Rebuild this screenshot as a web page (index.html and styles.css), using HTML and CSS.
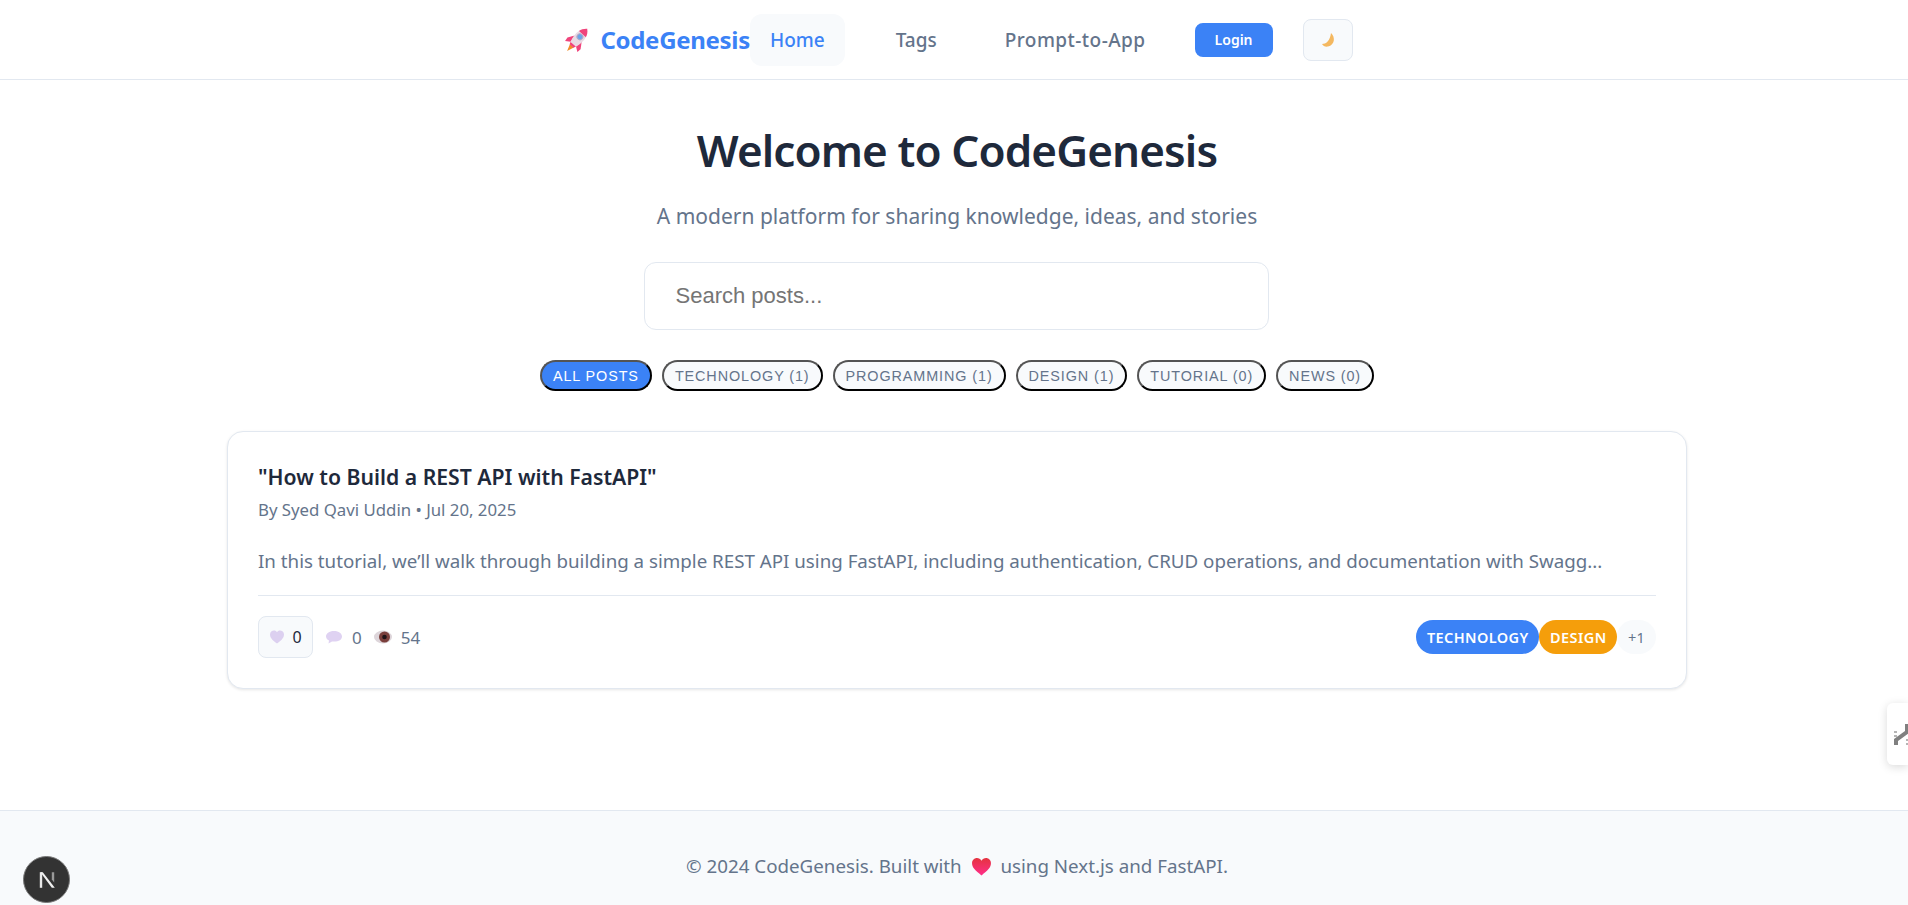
FILE: index.html
```html
<!DOCTYPE html>
<html lang="en">
<head>
    <meta charset="UTF-8">
    <meta name="viewport" content="width=device-width, initial-scale=1.0">
    <title>CodeGenesis</title>
    <link rel="stylesheet" href="styles.css">
</head>
<body>
    <header class="header">
        <nav class="nav">
            <a class="logo">
                <svg class="logo-icon" viewBox="0 0 26 26" width="27" height="27">
                    <g transform="rotate(42 13 13)">
                        <path d="M10.500 21 H15.500 L13 28 Z" fill="#f28c28"/>
                        <path d="M8.500 12 L4.500 18 L5 22 L9.500 19 Z" fill="#f0447c"/>
                        <path d="M17.500 12 L21.500 18 L21 22 L16.500 19 Z" fill="#f0447c"/>
                        <path d="M9.500 19 H16.500 L15.500 21.500 H10.500 Z" fill="#f0447c"/>
                        <path d="M8.500 6 H17.500 C18.500 10 18 15 16.500 19 H9.500 C8 15 7.500 10 8.500 6 Z" fill="#e9dbe4"/>
                        <path d="M13 -1 C15.500 1 17 3.500 17.500 6 H8.500 C9 3.500 10.500 1 13 -1 Z" fill="#f0447c"/>
                        <circle cx="13" cy="9.500" r="2.800" fill="#6aa5e8" stroke="#b0a8c8"/>
                    </g>
                </svg>
                <span>CodeGenesis</span>
            </a>
            <a class="nav-link active">Home</a>
            <a class="nav-link">Tags</a>
            <a class="nav-link prompt">Prompt-to-App</a>
            <button class="login-btn">Login</button>
            <button class="theme-btn">
                <svg viewBox="0 0 16 16" width="16" height="16">
                    <path d="M11 1 C15.500 5 15 13 8 14.500 C5.500 15 3 14 2 12 C6 12 10 9 11 1 Z" fill="#f4b860"/>
                </svg>
            </button>
        </nav>
    </header>

    <main class="main">
        <section class="hero">
            <h1>Welcome to CodeGenesis</h1>
            <p>A modern platform for sharing knowledge, ideas, and stories</p>
        </section>

        <input class="search" type="text" placeholder="Search posts...">

        <div class="filters">
            <button class="chip selected">All Posts</button>
            <button class="chip">Technology (1)</button>
            <button class="chip">Programming (1)</button>
            <button class="chip">Design (1)</button>
            <button class="chip">Tutorial (0)</button>
            <button class="chip">News (0)</button>
        </div>

        <article class="card">
            <h2>"How to Build a REST API with FastAPI"</h2>
            <div class="meta">By Syed Qavi Uddin • Jul 20, 2025</div>
            <p class="excerpt">In this tutorial, we’ll walk through building a simple REST API using FastAPI, including authentication, CRUD operations, and documentation with Swagg...</p>
            <div class="card-footer">
                <div class="stats">
                    <button class="like-btn">
                        <svg viewBox="0 0 16 16" width="16" height="16">
                            <path d="M8 14.500 C3 11 1 8.500 1 5.500 C1 3 3 1.500 5 1.500 C6.300 1.500 7.400 2.200 8 3.200 C8.600 2.200 9.700 1.500 11 1.500 C13 1.500 15 3 15 5.500 C15 8.500 13 11 8 14.500 Z" fill="#dcd0f0"/>
                        </svg>
                        <span>0</span>
                    </button>
                    <span class="stat">
                        <svg viewBox="0 0 18 16" width="18" height="16">
                            <path d="M9 2 C14 2 17 4.500 17 7.500 C17 10.500 14 12.500 9 12.500 L7 12.500 L3.500 14.500 L4 11.500 C2 10.500 1 9 1 7.500 C1 4.500 4 2 9 2 Z" fill="#dfd2f2"/>
                        </svg>
                        <span>0</span>
                    </span>
                    <span class="stat">
                        <svg viewBox="0 0 18 16" width="18" height="16">
                            <ellipse cx="9" cy="8" rx="9" ry="6.500" fill="#ddd5da"/>
                            <circle cx="10.500" cy="8" r="5.500" fill="#7a3f3c"/>
                            <circle cx="10.500" cy="8" r="2.300" fill="#1f1418"/>
                        </svg>
                        <span>54</span>
                    </span>
                </div>
                <div class="tags">
                    <span class="tag tag-blue">TECHNOLOGY</span>
                    <span class="tag tag-orange">DESIGN</span>
                    <span class="tag tag-more">+1</span>
                </div>
            </div>
        </article>
    </main>

    <footer class="footer">
        <p>© 2024 CodeGenesis. Built with
            <svg class="footer-heart" viewBox="0 0 20 20" width="21" height="21">
                <defs>
                    <linearGradient id="heartFill" x1="0" y1="0" x2="0" y2="1">
                        <stop offset="0" stop-color="#e5333f"/>
                        <stop offset="1" stop-color="#ff2e8a"/>
                    </linearGradient>
                </defs>
                <path d="M10 18.500 C4 14 1 11 1 7 C1 4 3.200 2 5.700 2 C7.500 2 9 3 10 4.500 C11 3 12.500 2 14.300 2 C16.800 2 19 4 19 7 C19 11 16 14 10 18.500 Z" fill="url(#heartFill)"/>
            </svg>
            using Next.js and FastAPI.</p>
    </footer>

    <div class="next-badge">
        <svg viewBox="0 0 20 20" width="24" height="24">
            <path d="M4 3.500 H6 V16.500 H4 Z" fill="#e8e8e8"/>
            <path d="M4.500 3.500 H6.500 L16.500 16.500 H14 Z" fill="#f0f0f0"/>
            <path d="M14 3.500 H16 V12 L14 9.500 Z" fill="#9a9a9a"/>
        </svg>
    </div>

    <div class="side-tab">
        <svg viewBox="0 0 16 22" width="16" height="22">
            <path d="M1 8 H4 V10 H1 Z M1 12 H4 V14 H1 Z M13 16 H16 V18 H13 Z M13 20 H16 V22 H13 Z" fill="#b5b5b5"/>
            <path d="M1 22 V16 L12 8 V1 H16 V10 L5 18 V22 Z" fill="#808080"/>
        </svg>
    </div>
</body>
</html>
```

FILE: styles.css
```css
* {
    box-sizing: border-box;
}
html, body {
    margin: 0;
    height: 905px;
    overflow: hidden;
}
body {
    font-family: "Noto Sans", "Open Sans", sans-serif;
    background-color: white;
    color: #1e293b;
    display: flex;
    flex-direction: column;
}
.header {
    height: 80px;
    flex-shrink: 0;
    border-bottom: 1px solid #e2e8f0;
    padding-left: 9px;
}
.nav {
    height: 79px;
    display: flex;
    align-items: center;
    justify-content: center;
}
.logo {
    display: flex;
    align-items: center;
    gap: 9px;
    font-size: 24px;
    font-weight: 700;
    color: #3b82f6;
    letter-spacing: -0.3px;
}
.nav-link {
    height: 52px;
    display: flex;
    align-items: center;
    padding: 0 20px;
    border-radius: 12px;
    font-size: 19px;
    font-weight: 500;
    color: #64748b;
    margin-right: 28px;
}
.nav-link.active {
    color: #3b82f6;
    background-color: #f8fafc;
    margin-right: 31px;
}
.nav-link.prompt {
    letter-spacing: 0.45px;
}
.login-btn {
    width: 78px;
    height: 34px;
    margin-left: 1px;
    border: none;
    border-radius: 8px;
    background-color: #3b82f6;
    color: white;
    font-family: inherit;
    font-size: 14px;
    font-weight: 600;
}
.theme-btn {
    width: 50px;
    height: 42px;
    margin-left: 30px;
    display: flex;
    align-items: center;
    justify-content: center;
    border: 1px solid #e2e8f0;
    border-radius: 8px;
    background-color: #f8fafc;
}
.main {
    flex: 1;
    padding-left: 6px;
    display: flex;
    flex-direction: column;
    align-items: center;
}
.hero {
    text-align: center;
    padding-top: 40px;
}
.hero h1 {
    margin: 0;
    font-size: 44px;
    line-height: 60px;
    font-weight: 600;
    letter-spacing: -0.9px;
    color: #1e293b;
}
.hero p {
    margin: 21px 0 0;
    font-size: 21px;
    line-height: 30px;
    color: #64748b;
}
.search {
    width: 625px;
    height: 68px;
    margin: 31px 2px 0 0;
    padding: 0 31px;
    border: 1px solid #e2e8f0;
    border-radius: 12px;
    background-color: white;
    font-family: "Liberation Sans", Arial, sans-serif;
    font-size: 22px;
    outline: none;
}
.filters {
    display: flex;
    gap: 10px;
    margin-top: 30px;
}
.chip {
    height: 31px;
    padding: 0 11px;
    border: 2px outset #000;
    border-radius: 20px;
    background-color: #f8fafc;
    color: #64748b;
    font-family: "Liberation Sans", Arial, sans-serif;
    font-size: 14.4px;
    text-transform: uppercase;
    letter-spacing: 0.9px;
}
.chip.selected {
    background-color: #3b82f6;
    color: white;
}
.card {
    width: 1460px;
    height: 258px;
    margin-top: 40px;
    padding: 29px 30px;
    border: 1px solid #e2e8f0;
    border-radius: 16px;
    background-color: white;
    box-shadow: 0 1px 3px rgba(0,0,0,0.1);
}
.card h2 {
    margin: 0;
    font-size: 21.200px;
    line-height: 32px;
    font-weight: 600;
    color: #1e293b;
}
.meta {
    margin-top: 4px;
    font-size: 16.800px;
    line-height: 26px;
    color: #64748b;
}
.excerpt {
    margin: 23px 0 0;
    font-size: 18.740px;
    line-height: 29px;
    color: #64748b;
}
.card-footer {
    margin-top: 20px;
    padding-top: 20px;
    border-top: 1px solid #e2e8f0;
    display: flex;
    justify-content: space-between;
    align-items: center;
}
.stats {
    display: flex;
    align-items: center;
    gap: 12px;
}
.like-btn {
    height: 42px;
    width: 55px;
    display: flex;
    align-items: center;
    justify-content: center;
    gap: 7px;
    border: 1px solid #e2e8f0;
    border-radius: 8px;
    background-color: #f8fafc;
    color: #1e293b;
    font-family: inherit;
    font-size: 16px;
}
.stat {
    display: flex;
    align-items: center;
    gap: 9px;
    font-size: 17px;
    color: #64748b;
}
.tags {
    display: flex;
}
.tag {
    height: 34px;
    display: flex;
    align-items: center;
    padding: 0 10.700px;
    border-radius: 17px;
    font-size: 14.500px;
    font-weight: 600;
    letter-spacing: 0.4px;
}
.tag-blue {
    background-color: #3b82f6;
    color: white;
}
.tag-orange {
    background-color: #f59e0b;
    color: white;
}
.tag-more {
    background-color: #f8fafc;
    color: #64748b;
    font-weight: 400;
}
.footer {
    height: 95px;
    flex-shrink: 0;
    border-top: 1px solid #e2e8f0;
    background-color: #f8fafc;
    padding: 42px 0 0 6px;
    text-align: center;
    font-size: 18.750px;
    line-height: 26px;
    color: #64748b;
}
.footer p {
    margin: 0;
}
.footer-heart {
    vertical-align: -4px;
    margin: 0 4px;
}
.next-badge {
    position: fixed;
    left: 23px;
    top: 856px;
    width: 47px;
    height: 47px;
    border-radius: 50%;
    background-color: #333;
    border: 1px solid #777;
    display: flex;
    align-items: center;
    justify-content: center;
}
.side-tab {
    position: fixed;
    right: 0;
    top: 703px;
    width: 21px;
    height: 62px;
    padding: 20px 0 0 6px;
    background-color: white;
    border-radius: 6px 0 0 6px;
    box-shadow: 0 2px 10px rgba(0,0,0,0.15);
    overflow: hidden;
}
```
